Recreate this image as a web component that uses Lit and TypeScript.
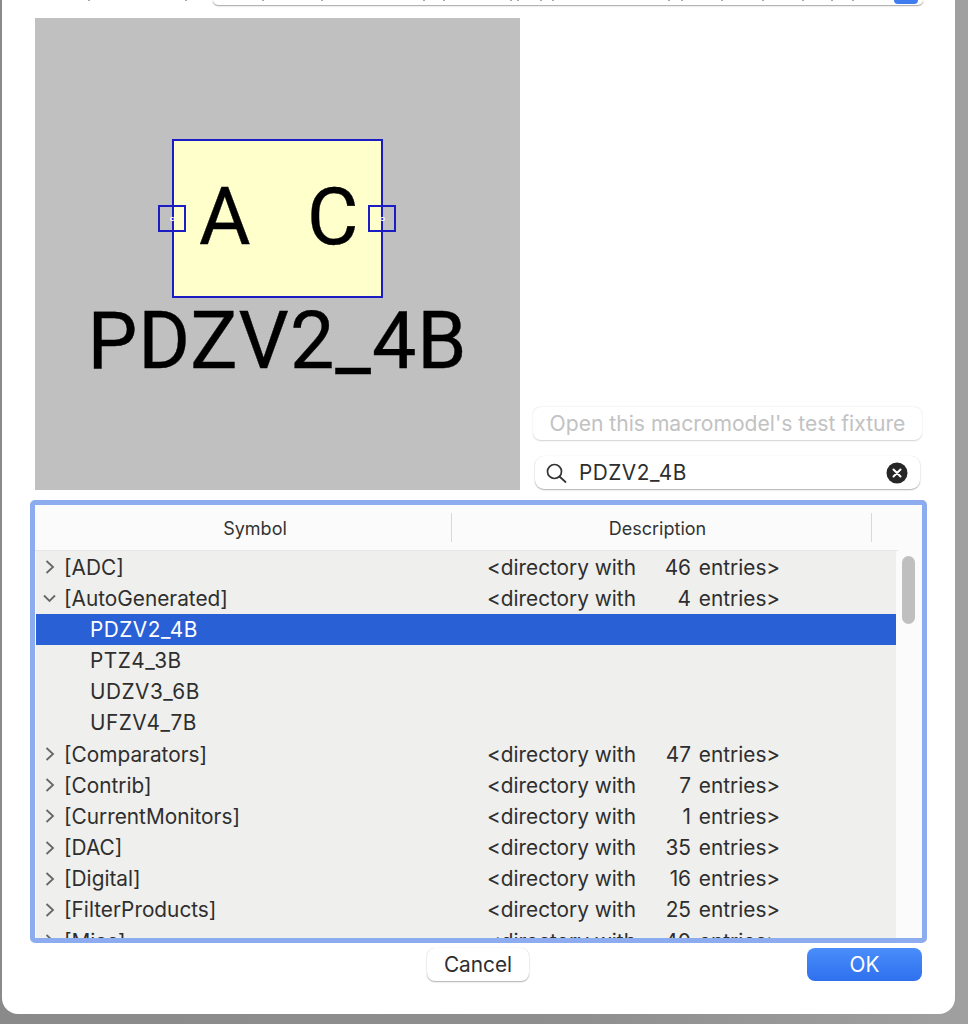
import { LitElement, html, css, svg } from 'lit';
import { customElement } from 'lit/decorators.js';

interface Row {
  name: string;
  count?: number;
  open?: boolean;
  child?: boolean;
  selected?: boolean;
}

const ROWS: Row[] = [
  { name: '[ADC]', count: 46 },
  { name: '[AutoGenerated]', count: 4, open: true },
  { name: 'PDZV2_4B', child: true, selected: true },
  { name: 'PTZ4_3B', child: true },
  { name: 'UDZV3_6B', child: true },
  { name: 'UFZV4_7B', child: true },
  { name: '[Comparators]', count: 47 },
  { name: '[Contrib]', count: 7 },
  { name: '[CurrentMonitors]', count: 1 },
  { name: '[DAC]', count: 35 },
  { name: '[Digital]', count: 16 },
  { name: '[FilterProducts]', count: 25 },
  { name: '[Misc]', count: 40 }
];

// descenders of the line that is scrolled off above the dialog
const CLIPPED_MARKS = [88, 185, 262, 321, 423, 443, 510, 517, 540, 552, 668, 681, 721, 762, 802, 831, 852];

const chevronRight = svg`<path d="M3.5 1l6.5 6-6.5 6" />`;
const chevronDown = svg`<path d="M1 4.5l5.5 5.5 5.5-5.5" />`;

@customElement('app-root')
export class AppRoot extends LitElement {
  static styles = css`
    :host {
      display: block;
      position: relative;
      width: 968px;
      height: 1024px;
      overflow: hidden;
      background: linear-gradient(90deg, #8a8a8a 0%, #8f8f8f 60%, #a0a0a0 100%);
      font-family: Inter, 'Liberation Sans', sans-serif;
      color: #2e2e2e;
    }

    .window {
      box-sizing: border-box;
      margin-left: 2px;
      width: 953px;
      height: 1014px;
      background: #fff;
      border-radius: 0 0 16px 16px;
      display: flex;
      flex-direction: column;
      overflow: hidden;
    }

    .marks {
      position: absolute;
      left: 0;
      top: 0;
    }

    .top-field {
      align-self: flex-end;
      box-sizing: border-box;
      margin-right: 32px;
      width: 710px;
      height: 5px;
      flex-shrink: 0;
      background: #fff;
      border-radius: 0 0 7px 7px;
      box-shadow: 0 1px 1.5px rgba(0, 0, 0, 0.35), 0 0 1px rgba(0, 0, 0, 0.2);
      position: relative;
    }

    .top-stepper {
      position: absolute;
      right: 5px;
      top: -4px;
      width: 24px;
      height: 8px;
      border-radius: 4px;
      background: #3f7cf0;
    }

    .upper {
      display: flex;
      margin: 13px 0 0 33px;
      height: 472px;
      flex-shrink: 0;
    }

    .preview {
      position: relative;
      width: 485px;
      height: 472px;
      background: #c0c0c0;
      overflow: hidden;
    }

    .symbol {
      position: absolute;
      box-sizing: border-box;
      left: 137px;
      top: 121px;
      width: 211px;
      height: 159px;
      background: #ffffcc;
      border: 2px solid #1c1cc4;
    }

    .pin {
      position: absolute;
      box-sizing: border-box;
      top: 187px;
      width: 28px;
      height: 27px;
      border: 2px solid #1c1cc4;
    }

    .pin.left {
      left: 123px;
    }

    .pin.right {
      left: 333px;
    }

    .pin::after {
      content: '';
      position: absolute;
      left: 10px;
      top: 9.5px;
      width: 3px;
      height: 2px;
      border: 1px solid #fff;
      border-radius: 50%;
    }

    .glyph {
      position: absolute;
      top: 144px;
      font-family: Roboto, sans-serif;
      font-size: 79px;
      line-height: 110px;
      color: #000;
      -webkit-text-stroke: 0.4px #000;
    }

    .glyph.a {
      left: 164px;
    }

    .glyph.c {
      left: 272px;
    }

    .part-name {
      position: absolute;
      left: 0;
      right: 0;
      top: 273px;
      text-align: center;
      font-family: Roboto, sans-serif;
      font-size: 79px;
      letter-spacing: 1px;
      line-height: 100px;
      color: #000;
      white-space: nowrap;
      -webkit-text-stroke: 0.4px #000;
    }

    .side {
      width: 390px;
      margin-left: 13px;
      display: flex;
      flex-direction: column;
      justify-content: flex-end;
    }

    .fixture {
      height: 33px;
      margin-right: 1px;
      border-radius: 8px;
      background: #fff;
      box-shadow: 0 0.5px 1.5px rgba(0, 0, 0, 0.18);
      color: #c2c2c2;
      font-size: 21.1px;
      display: flex;
      align-items: center;
      justify-content: center;
      margin-bottom: 16px;
    }

    .search {
      box-sizing: border-box;
      margin: 0 3px 1px 2px;
      height: 33px;
      border-radius: 9px;
      background: #fff;
      box-shadow: 0 1px 1.5px rgba(0, 0, 0, 0.3), 0 0 1px rgba(0, 0, 0, 0.12);
      display: flex;
      align-items: center;
      padding: 0 12px 0 11px;
      font-size: 20.8px;
      letter-spacing: 0.5px;
    }

    .search .value {
      flex: 1;
      margin-left: 12px;
    }

    .list {
      box-sizing: border-box;
      margin: 10px 0 0 28px;
      width: 897px;
      height: 443px;
      border: 5px solid #8dabef;
      border-radius: 5px;
      background: #fbfbfb;
      display: flex;
      flex-direction: column;
      overflow: hidden;
      flex-shrink: 0;
    }

    .head {
      height: 46px;
      flex-shrink: 0;
      display: flex;
      align-items: center;
      font-size: 18px;
      color: #333;
      box-sizing: border-box;
      border-bottom: 1px solid #e6e6e6;
      margin-right: 24px;
    }

    .head .col {
      box-sizing: border-box;
      display: flex;
      align-items: center;
      justify-content: center;
      height: 29px;
      padding-top: 1px;
      border-right: 1px solid #d8d8d8;
    }

    .head .symbol-col {
      width: 417px;
      padding-left: 24px;
    }

    .head .desc-col {
      width: 420px;
      padding-right: 8px;
    }

    .body {
      flex: 1;
      display: flex;
      min-height: 0;
    }

    .rows {
      width: 860px;
      background: #efefed;
      overflow: hidden;
      margin-left: 1px;
      padding-top: 0.5px;
    }

    .row {
      height: 31.18px;
      display: flex;
      align-items: center;
      font-size: 20.8px;
      white-space: pre;
    }

    .row.selected {
      background: #2a60d6;
      color: #fff;
    }

    .twist {
      width: 14px;
      height: 14px;
      margin-left: 7px;
      margin-right: 7px;
      fill: none;
      stroke: #666;
      stroke-width: 1.8;
      flex-shrink: 0;
    }

    .name {
      width: 423px;
      flex-shrink: 0;
    }

    .name.child {
      margin-left: 54px;
      width: 398px;
      letter-spacing: 0.5px;
    }

    .dir {
      width: 168px;
      flex-shrink: 0;
    }

    .count {
      width: 36px;
      margin-right: 2px;
      text-align: right;
      flex-shrink: 0;
    }

    .track {
      flex: 1;
      position: relative;
    }

    .thumb {
      position: absolute;
      left: 6px;
      top: 5px;
      width: 13px;
      height: 68px;
      border-radius: 7px;
      background: #bfbfbf;
    }

    .actions {
      flex: 1;
      position: relative;
    }

    .btn {
      position: absolute;
      top: 5px;
      box-sizing: border-box;
      height: 33px;
      border-radius: 8px;
      display: flex;
      align-items: center;
      justify-content: center;
      font-size: 20.8px;
    }

    .btn.cancel {
      left: 425px;
      width: 102px;
      background: #fff;
      box-shadow: 0 1px 1.5px rgba(0, 0, 0, 0.3), 0 0 1px rgba(0, 0, 0, 0.15);
    }

    .btn.ok {
      left: 805px;
      width: 115px;
      color: #fff;
      background: linear-gradient(#4a8dfb, #2f70ee);
    }
  `;

  private renderRow(row: Row) {
    const twist = row.child
      ? null
      : html`<svg class="twist" viewBox="0 0 14 14">${row.open ? chevronDown : chevronRight}</svg>`;
    return html`
      <div class="row ${row.selected ? 'selected' : ''}">
        ${twist}
        <span class="name ${row.child ? 'child' : ''}">${row.name}</span>
        ${row.count !== undefined
          ? html`<span class="dir">&lt;directory with</span><span class="count">${row.count}</span
              ><span> entries&gt;</span>`
          : null}
      </div>
    `;
  }

  render() {
    return html`
      <div class="window">
        <div class="top-field"><div class="top-stepper"></div></div>
        <div class="upper">
          <div class="preview">
            <div class="symbol"></div>
            <div class="pin left"></div>
            <div class="pin right"></div>
            <div class="glyph a">A</div>
            <div class="glyph c">C</div>
            <div class="part-name">PDZV2_4B</div>
          </div>
          <div class="side">
            <div class="fixture">Open this macromodel's test fixture</div>
            <div class="search">
              <svg width="21" height="20" viewBox="0 0 21 20" fill="none" stroke="#333" stroke-width="1.7">
                <circle cx="8.5" cy="8.5" r="7" />
                <path d="M13.5 13.5l6 5.5" stroke-linecap="round" />
              </svg>
              <span class="value">PDZV2_4B</span>
              <svg width="22" height="22" viewBox="0 0 22 22">
                <circle cx="11" cy="11" r="10.5" fill="#262626" />
                <path d="M7.5 7.5l7 7M14.5 7.5l-7 7" stroke="#fff" stroke-width="2" stroke-linecap="round" />
              </svg>
            </div>
          </div>
        </div>
        <div class="list">
          <div class="head">
            <div class="col symbol-col">Symbol</div>
            <div class="col desc-col">Description</div>
          </div>
          <div class="body">
            <div class="rows">${ROWS.map((r) => this.renderRow(r))}</div>
            <div class="track"><div class="thumb"></div></div>
          </div>
        </div>
        <div class="actions">
          <div class="btn cancel">Cancel</div>
          <div class="btn ok">OK</div>
        </div>
      </div>
      <svg class="marks" width="968" height="2" fill="#a8a8a8">
        ${CLIPPED_MARKS.map((x) => svg`<rect x=${x} y="0" width="2" height="1" />`)}
      </svg>
    `;
  }
}
